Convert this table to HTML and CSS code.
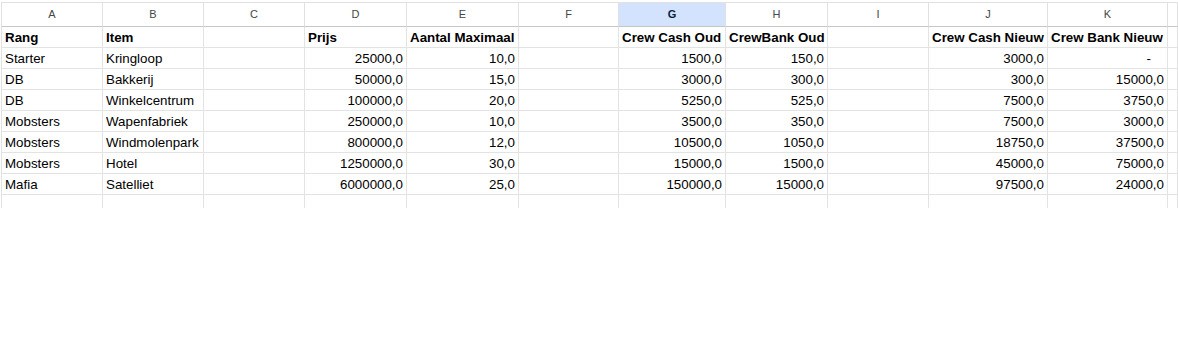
FILE: index.html
```html
<!DOCTYPE html>
<html>
<head>
<meta charset="utf-8">
<link rel="stylesheet" href="styles.css">
</head>
<body>
<div class="sheet">
  <div class="grid">
    <div class="ch">A</div><div class="ch">B</div><div class="ch">C</div><div class="ch">D</div><div class="ch">E</div><div class="ch">F</div><div class="ch sel">G</div><div class="ch">H</div><div class="ch">I</div><div class="ch">J</div><div class="ch">K</div><div class="ch"></div>

    <div class="c b">Rang</div><div class="c b">Item</div><div class="c"></div><div class="c b">Prijs</div><div class="c b">Aantal Maximaal</div><div class="c"></div><div class="c b">Crew Cash Oud</div><div class="c b">CrewBank Oud</div><div class="c"></div><div class="c b">Crew Cash Nieuw</div><div class="c b">Crew Bank Nieuw</div><div class="c"></div>

    <div class="c">Starter</div><div class="c">Kringloop</div><div class="c"></div><div class="c n">25000,0</div><div class="c n">10,0</div><div class="c"></div><div class="c n">1500,0</div><div class="c n">150,0</div><div class="c"></div><div class="c n">3000,0</div><div class="c n dash">-</div><div class="c"></div>

    <div class="c">DB</div><div class="c">Bakkerij</div><div class="c"></div><div class="c n">50000,0</div><div class="c n">15,0</div><div class="c"></div><div class="c n">3000,0</div><div class="c n">300,0</div><div class="c"></div><div class="c n">300,0</div><div class="c n">15000,0</div><div class="c"></div>

    <div class="c">DB</div><div class="c">Winkelcentrum</div><div class="c"></div><div class="c n">100000,0</div><div class="c n">20,0</div><div class="c"></div><div class="c n">5250,0</div><div class="c n">525,0</div><div class="c"></div><div class="c n">7500,0</div><div class="c n">3750,0</div><div class="c"></div>

    <div class="c">Mobsters</div><div class="c">Wapenfabriek</div><div class="c"></div><div class="c n">250000,0</div><div class="c n">10,0</div><div class="c"></div><div class="c n">3500,0</div><div class="c n">350,0</div><div class="c"></div><div class="c n">7500,0</div><div class="c n">3000,0</div><div class="c"></div>

    <div class="c">Mobsters</div><div class="c">Windmolenpark</div><div class="c"></div><div class="c n">800000,0</div><div class="c n">12,0</div><div class="c"></div><div class="c n">10500,0</div><div class="c n">1050,0</div><div class="c"></div><div class="c n">18750,0</div><div class="c n">37500,0</div><div class="c"></div>

    <div class="c">Mobsters</div><div class="c">Hotel</div><div class="c"></div><div class="c n">1250000,0</div><div class="c n">30,0</div><div class="c"></div><div class="c n">15000,0</div><div class="c n">1500,0</div><div class="c"></div><div class="c n">45000,0</div><div class="c n">75000,0</div><div class="c"></div>

    <div class="c">Mafia</div><div class="c">Satelliet</div><div class="c"></div><div class="c n">6000000,0</div><div class="c n">25,0</div><div class="c"></div><div class="c n">150000,0</div><div class="c n">15000,0</div><div class="c"></div><div class="c n">97500,0</div><div class="c n">24000,0</div><div class="c"></div>

    <div class="c e"></div><div class="c e"></div><div class="c e"></div><div class="c e"></div><div class="c e"></div><div class="c e"></div><div class="c e"></div><div class="c e"></div><div class="c e"></div><div class="c e"></div><div class="c e"></div><div class="c e"></div>
  </div>
</div>
</body>
</html>
```

FILE: styles.css
```css
html, body {
  margin: 0;
  padding: 0;
  background: #ffffff;
}

body {
  width: 1178px;
  height: 341px;
  overflow: hidden;
  font-family: "Liberation Sans", Arial, sans-serif;
}

.sheet {
  padding: 2px 0 0 1px;
}

.grid {
  display: grid;
  grid-template-columns: 101px 101px 101px 102px 112px 100px 107px 102px 101px 119px 120px 1fr;
  grid-template-rows: 24px repeat(8, 21px) 13px;
  border-left: 1px solid #e1e1e1;
  border-top: 1px solid #e1e1e1;
}

.ch {
  box-sizing: border-box;
  border-right: 1px solid #e1e1e1;
  border-bottom: 1px solid #c4c7c5;
  font-size: 11px;
  color: #444746;
  text-align: center;
  line-height: 23px;
}

.ch.sel {
  background: #d3e3fd;
  color: #0b1e3e;
  font-weight: bold;
}

.c {
  box-sizing: border-box;
  border-right: 1px solid #e2e3e3;
  border-bottom: 1px solid #e2e3e3;
  font-size: 13.33px;
  line-height: 19px;
  padding: 1px 3px 0;
  color: #000000;
  white-space: nowrap;
  overflow: hidden;
}

.b {
  font-weight: bold;
}

.n {
  text-align: right;
}

.dash {
  padding-right: 16px;
}

.e {
  border-bottom: none;
}
```
